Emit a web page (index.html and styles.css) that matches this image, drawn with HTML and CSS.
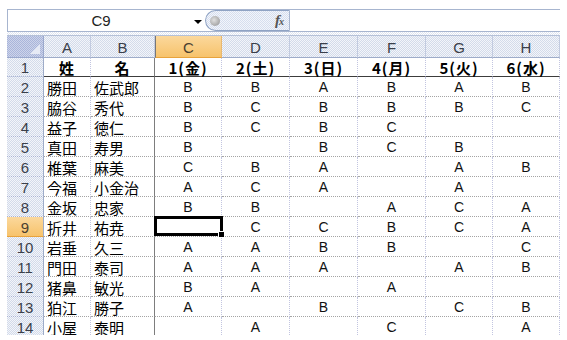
FILE: index.html
```html
<!DOCTYPE html>
<html lang="ja">
<head>
<meta charset="utf-8">
<link rel="stylesheet" href="styles.css">
</head>
<body>
<div class="sheet">
  <div class="fbar">
    <div class="namebox"><span class="ref">C9</span><span class="arrow"></span></div>
    <div class="pill"><span class="dot"></span><span class="fx">f<span class="x">x</span></span></div>
    <div class="formula"></div>
  </div>
  <div class="sep"></div>
  <div class="grid">
    <div class="corner"></div><div class="ch">A</div><div class="ch">B</div><div class="ch sel">C</div><div class="ch">D</div><div class="ch">E</div><div class="ch">F</div><div class="ch">G</div><div class="ch">H</div>

    <div class="rh">1</div><div class="c hd">姓</div><div class="c hd b">名</div><div class="c hd">1(金)</div><div class="c hd">2(土)</div><div class="c hd">3(日)</div><div class="c hd">4(月)</div><div class="c hd">5(火)</div><div class="c hd">6(水)</div>

    <div class="rh">2</div><div class="c nm">勝田</div><div class="c nm b">佐武郎</div><div class="c">B</div><div class="c">B</div><div class="c">A</div><div class="c">B</div><div class="c">A</div><div class="c">B</div>

    <div class="rh">3</div><div class="c nm">脇谷</div><div class="c nm b">秀代</div><div class="c">B</div><div class="c">C</div><div class="c">B</div><div class="c">B</div><div class="c">B</div><div class="c">C</div>

    <div class="rh">4</div><div class="c nm">益子</div><div class="c nm b">徳仁</div><div class="c">B</div><div class="c">C</div><div class="c">B</div><div class="c">C</div><div class="c"></div><div class="c"></div>

    <div class="rh">5</div><div class="c nm">真田</div><div class="c nm b">寿男</div><div class="c">B</div><div class="c"></div><div class="c">B</div><div class="c">C</div><div class="c">B</div><div class="c"></div>

    <div class="rh">6</div><div class="c nm">椎葉</div><div class="c nm b">麻美</div><div class="c">C</div><div class="c">B</div><div class="c">A</div><div class="c"></div><div class="c">A</div><div class="c">B</div>

    <div class="rh">7</div><div class="c nm">今福</div><div class="c nm b">小金治</div><div class="c">A</div><div class="c">C</div><div class="c">A</div><div class="c"></div><div class="c">A</div><div class="c"></div>

    <div class="rh">8</div><div class="c nm">金坂</div><div class="c nm b">忠家</div><div class="c">B</div><div class="c">B</div><div class="c"></div><div class="c">A</div><div class="c">C</div><div class="c">A</div>

    <div class="rh sel">9</div><div class="c nm">折井</div><div class="c nm b">祐尭</div><div class="c cur"></div><div class="c">C</div><div class="c">C</div><div class="c">B</div><div class="c">C</div><div class="c">A</div>

    <div class="rh">10</div><div class="c nm">岩垂</div><div class="c nm b">久三</div><div class="c">A</div><div class="c">A</div><div class="c">B</div><div class="c">B</div><div class="c"></div><div class="c">C</div>

    <div class="rh">11</div><div class="c nm">門田</div><div class="c nm b">泰司</div><div class="c">A</div><div class="c">A</div><div class="c">A</div><div class="c"></div><div class="c">A</div><div class="c">B</div>

    <div class="rh">12</div><div class="c nm">猪鼻</div><div class="c nm b">敏光</div><div class="c">B</div><div class="c">A</div><div class="c"></div><div class="c">A</div><div class="c"></div><div class="c"></div>

    <div class="rh">13</div><div class="c nm">狛江</div><div class="c nm b">勝子</div><div class="c">A</div><div class="c"></div><div class="c">B</div><div class="c"></div><div class="c">C</div><div class="c">B</div>

    <div class="rh">14</div><div class="c nm">小屋</div><div class="c nm b">泰明</div><div class="c"></div><div class="c">A</div><div class="c"></div><div class="c">C</div><div class="c"></div><div class="c">A</div>
  </div>
</div>
</body>
</html>
```

FILE: styles.css
```css
html, body {
  margin: 0;
  padding: 0;
  background: #fff;
}

.sheet {
  width: 553px;
  margin-left: 7px;
  padding-top: 9px;
  font-family: "Liberation Sans", Arial, sans-serif;
}

/* formula bar */
.fbar {
  display: flex;
  height: 23px;
  box-sizing: border-box;
  border: 1px solid #a7b5cf;
  border-right: 0;
  background: #fff;
}

.namebox {
  width: 197px;
  display: flex;
  align-items: center;
}

.ref {
  width: 186px;
  text-align: center;
  font-size: 15px;
  color: #222;
}

.arrow {
  width: 0;
  height: 0;
  border-left: 4px solid transparent;
  border-right: 4px solid transparent;
  border-top: 4px solid #000;
  margin-top: 2px;
}

.pill {
  width: 85px;
  box-sizing: border-box;
  display: flex;
  align-items: center;
  justify-content: space-between;
  padding: 0 6px 0 4px;
  border: 1px solid #8fa3c4;
  border-right: 1px solid #a7b5cf;
  border-radius: 11px 0 0 11px;
  background: repeating-conic-gradient(#d6deee 0 25%, #f2f5fb 0 50%) 0 0 / 2px 2px;
}

.dot {
  width: 10px;
  height: 10px;
  border-radius: 50%;
  background: radial-gradient(circle at 40% 40%, #e0e0e0, #8f8f8f);
}

.fx {
  font-family: "Liberation Serif", serif;
  font-style: italic;
  font-weight: bold;
  font-size: 15px;
  color: #555;
  letter-spacing: -1px;
}

.fx .x {
  font-size: 10px;
}

.formula {
  flex: 1;
}

.sep {
  height: 3px;
  border-bottom: 1px solid #b5c1d8;
  background: repeating-conic-gradient(#dfe5f1 0 25%, #ffffff 0 50%) 0 0 / 2px 2px;
}

/* grid */
.grid {
  display: grid;
  grid-template-columns: 37px 47px 64px 67px 68px 68px 68px 67px 67px;
  grid-template-rows: 22px 19px repeat(13, 20px);
  height: 299px;
  overflow: hidden;
}

.corner, .ch, .rh, .c {
  box-sizing: border-box;
  display: flex;
  align-items: center;
  justify-content: center;
  overflow: visible;
}

.corner {
  position: relative;
  background: repeating-conic-gradient(#a9b5da 0 25%, #cdd4ea 0 50%) 0 0 / 2px 2px;
  border-right: 1px solid #9aa8cc;
  border-bottom: 1px solid #9aa8cc;
}

.corner::after {
  content: "";
  position: absolute;
  right: 3px;
  bottom: 3px;
  width: 0;
  height: 0;
  border-left: 10px solid transparent;
  border-bottom: 10px solid #e6eaf5;
}

.ch {
  font-size: 15px;
  color: #3a3f4a;
  padding-top: 2px;
  background: repeating-conic-gradient(#d3dbea 0 25%, #f3f5fa 0 50%) 0 0 / 2px 2px;
  border-right: 1px solid #c2cbe0;
  border-bottom: 1px solid #9eacc9;
}

.rh {
  font-size: 15px;
  color: #3a3f4a;
  padding-top: 1px;
  background: repeating-conic-gradient(#d3dbea 0 25%, #f3f5fa 0 50%) 0 0 / 2px 2px;
  border-right: 1px solid #9eacc9;
  border-bottom: 1px dotted #aab4d4;
}

.ch.sel, .rh.sel {
  background: linear-gradient(#fbd89c, #f7c36c);
  border-bottom: 1px solid #e8a33c;
  color: #4a4030;
}

.ch.sel {
  border-left: 1px solid #777;
  border-right: 1px solid #e8b870;
}

.c {
  font-size: 14px;
  color: #111;
  padding-top: 1px;
  border-right: 1px dotted #c2c5e0;
  border-bottom: 1px dotted #a4a4a4;
}

.c.nm {
  justify-content: flex-start;
  padding-left: 3px;
  font-family: "Noto Sans CJK JP", sans-serif;
  font-size: 15px;
  color: #000;
}

.c.hd {
  font-family: "Noto Sans CJK JP", sans-serif;
  font-weight: bold;
  font-size: 15px;
  color: #000;
  letter-spacing: 1px;
  border-bottom: 1px solid #3c3c3c;
}

.c.b {
  border-right: 1px solid #7d7d7d;
}

.c.cur {
  position: relative;
}

.c.cur::after {
  content: "";
  position: absolute;
  left: -1px;
  top: -1px;
  right: -2px;
  bottom: 0;
  border: 3px solid #000;
}

.c.cur::before {
  content: "";
  position: absolute;
  right: -4px;
  bottom: -2px;
  width: 5px;
  height: 5px;
  background: #000;
  border: 1px solid #fff;
  z-index: 2;
}
```
